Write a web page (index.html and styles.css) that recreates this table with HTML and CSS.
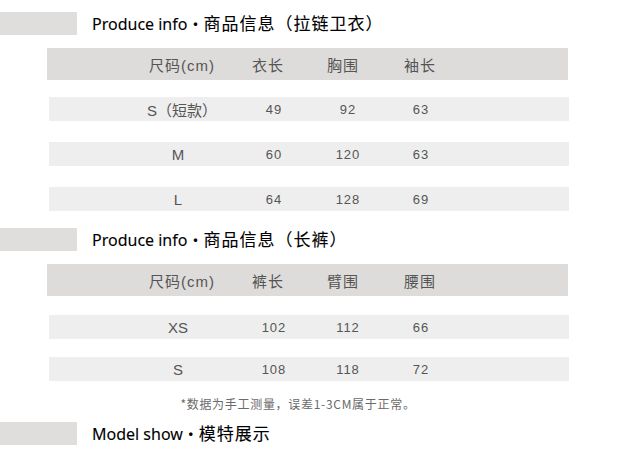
FILE: index.html
```html
<!DOCTYPE html>
<html lang="zh">
<head>
<meta charset="utf-8">
<link rel="stylesheet" href="styles.css">
</head>
<body>
<div class="page">
  <div class="section-title t1">
    <div class="bar"></div>
    <h2 class="title">Produce info<span class="dot">・</span><span class="cjk">商品信息（拉链卫衣）</span></h2>
  </div>
  <div class="table">
    <div class="row head">
      <span class="c1">尺码(cm)</span><span class="c2">衣长</span><span class="c3">胸围</span><span class="c4">袖长</span>
    </div>
    <div class="row data r-first">
      <span class="c1 lbl">S（短款）</span><span class="c2 num">49</span><span class="c3 num">92</span><span class="c4 num">63</span>
    </div>
    <div class="row data">
      <span class="c1 lbl sz">M</span><span class="c2 num">60</span><span class="c3 num">120</span><span class="c4 num">63</span>
    </div>
    <div class="row data">
      <span class="c1 lbl sz">L</span><span class="c2 num">64</span><span class="c3 num">128</span><span class="c4 num">69</span>
    </div>
  </div>

  <div class="section-title t2">
    <div class="bar"></div>
    <h2 class="title">Produce info<span class="dot">・</span><span class="cjk">商品信息（长裤）</span></h2>
  </div>
  <div class="table">
    <div class="row head">
      <span class="c1">尺码(cm)</span><span class="c2">裤长</span><span class="c3">臂围</span><span class="c4">腰围</span>
    </div>
    <div class="row data r-first2">
      <span class="c1 lbl sz">XS</span><span class="c2 num">102</span><span class="c3 num">112</span><span class="c4 num">66</span>
    </div>
    <div class="row data r-next2">
      <span class="c1 lbl sz">S</span><span class="c2 num">108</span><span class="c3 num">118</span><span class="c4 num">72</span>
    </div>
  </div>

  <p class="note">*数据为手工测量，误差1-3CM属于正常。</p>

  <div class="section-title t3">
    <div class="bar"></div>
    <h2 class="title">Model show<span class="dot">・</span><span class="cjk">模特展示</span></h2>
  </div>
</div>
</body>
</html>
```
FILE: styles.css
```css
* { box-sizing: border-box; }
html, body { margin: 0; padding: 0; background: #fff; }
body {
  width: 620px;
  height: 458px;
  overflow: hidden;
  font-family: "Noto Sans", "Noto Sans CJK SC", sans-serif;
}
.page { display: flex; flex-direction: column; }

.section-title {
  display: flex;
  align-items: center;
  height: 23px;
  gap: 15px;
}
.t1 { margin-top: 12px; }
.t2 { margin-top: 17px; }
.t3 { margin-top: 11px; }
.bar {
  width: 77px;
  height: 23px;
  background: #dfdedd;
  flex: none;
}
.title {
  margin: 0;
  font-size: 16px;
  font-weight: 400;
  color: #000;
  line-height: 23px;
  white-space: nowrap;
  font-family: "Noto Sans", "Noto Sans CJK SC", sans-serif;
  -webkit-text-stroke: 0.1px #000;
}
.dot { font-family: "Noto Sans CJK SC", sans-serif; font-size: 16px; }
.cjk { font-size: 17px; letter-spacing: 1px; font-family: "Noto Sans CJK SC", sans-serif; }

.table { display: flex; flex-direction: column; }
.row {
  display: grid;
  grid-template-columns: 90px 82px 68px 86px;
  align-items: center;
  color: #555;
  font-family: "Liberation Sans", "Noto Sans CJK SC", sans-serif;
}
.row > span { text-align: center; white-space: nowrap; }
.head {
  margin-top: 13px;
  margin-left: 47px;
  width: 521px;
  height: 32px;
  padding-left: 90px;
  background: #dddcdb;
  font-size: 15px;
  letter-spacing: 1px;
}
.data {
  margin-left: 49px;
  width: 520px;
  height: 24px;
  padding-left: 88px;
  background: #eeeeee;
  margin-top: 21px;
}
.r-first { margin-top: 17px; }
.r-first2 { margin-top: 19px; }
.r-next2 { margin-top: 18px; }
.lbl { font-size: 15px; color: #555; }
.sz { font-size: 15px; padding-right: 8px; }
.num {
  font-size: 13px;
  letter-spacing: 1px;
  color: #555;
}
.c2.num { padding-left: 12px; }
.c3.num { padding-left: 10px; }
.c4.num { padding-left: 2px; }

.note {
  margin: 16px 0 0 0;
  text-align: center;
  width: 596px;
  font-size: 12px;
  line-height: 14px;
  color: #6a6a6a;
  font-family: "Noto Sans CJK SC", sans-serif;
  letter-spacing: 0.7px;
}
```
